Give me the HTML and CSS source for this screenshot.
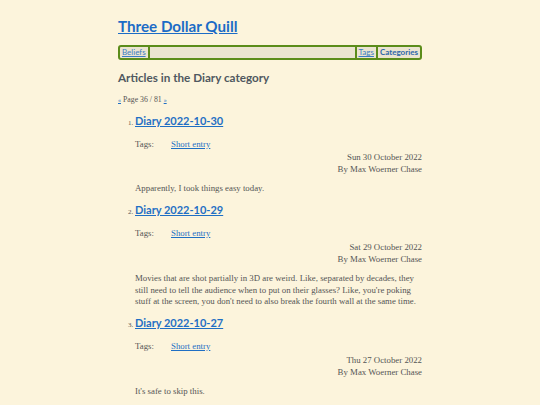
FILE: index.html
```html
<!DOCTYPE html>
<html>
<head>
<meta charset="utf-8">
<link rel="stylesheet" href="styles.css">
</head>
<body>
<div class="page">
  <header class="site-header">
    <h1 class="site-title"><a href="#">Three Dollar Quill</a></h1>
    <nav class="menu">
      <a class="menu-item" href="#">Beliefs</a>
      <span class="menu-spacer"></span>
      <a class="menu-item" href="#">Tags</a>
      <a class="menu-item current" href="#">Categories</a>
    </nav>
  </header>
  <main>
    <h2 class="page-heading">Articles in the Diary category</h2>
    <p class="pager"><a href="#">«</a> Page 36 / 81 <a href="#">»</a></p>
    <ol class="articles">
      <li class="article">
        <h3 class="article-title"><a href="#">Diary 2022-10-30</a></h3>
        <div class="tags"><span class="tags-label">Tags:</span><a href="#">Short entry</a></div>
        <div class="meta">
          <div>Sun 30 October 2022</div>
          <div>By Max Woerner Chase</div>
        </div>
        <p class="summary">Apparently, I took things easy today.</p>
      </li>
      <li class="article">
        <h3 class="article-title"><a href="#">Diary 2022-10-29</a></h3>
        <div class="tags"><span class="tags-label">Tags:</span><a href="#">Short entry</a></div>
        <div class="meta">
          <div>Sat 29 October 2022</div>
          <div>By Max Woerner Chase</div>
        </div>
        <p class="summary">Movies that are shot partially in 3D are weird. Like, separated by decades, they still need to tell the audience when to put on their glasses? Like, you're poking stuff at the screen, you don't need to also break the fourth wall at the same time.</p>
      </li>
      <li class="article">
        <h3 class="article-title"><a href="#">Diary 2022-10-27</a></h3>
        <div class="tags"><span class="tags-label">Tags:</span><a href="#">Short entry</a></div>
        <div class="meta">
          <div>Thu 27 October 2022</div>
          <div>By Max Woerner Chase</div>
        </div>
        <p class="summary">It's safe to skip this.</p>
      </li>
    </ol>
  </main>
</div>
</body>
</html>
```
FILE: styles.css
```css
html, body {
  margin: 0;
  padding: 0;
  background: #fcf4dc;
}
body {
  font-family: "Liberation Serif", serif;
  color: #555;
  font-size: 8.8px;
  line-height: 11.7px;
}
.page {
  width: 304px;
  margin: 0 auto;
  padding-top: 14px;
}
a { color: #1f6fc4; }
.site-title {
  margin: 0;
  font-family: Lato, sans-serif;
  font-size: 15.2px;
  line-height: 24px;
  font-weight: 700;
}
.site-title a { color: #1c6cc6; }
.menu {
  margin-top: 7px;
  display: flex;
  border: 2px solid #5b8c1a;
  border-radius: 3px;
  background: #ebe4d0;
  font-family: Lato, sans-serif;
  font-size: 8px;
  line-height: 11px;
}
.menu-item {
  padding: 0 2px;
  border-right: 2px solid #5b8c1a;
  color: #3a7cc2;
}
.menu-spacer {
  flex: 1;
  border-right: 2px solid #5b8c1a;
}
.menu-item:last-child { border-right: none; }
.menu-item.current {
  font-weight: 700;
  text-decoration: none;
  color: #2b66a8;
}
.page-heading {
  margin: 8px 0 0;
  font-family: Lato, sans-serif;
  font-size: 11.7px;
  line-height: 18px;
  color: #4f5860;
}
.pager {
  margin: 8px 0 0;
  font-size: 7.8px;
}
.pager a { font-size: 6px; }
.articles {
  margin: 0;
  padding-left: 17px;
}
.article::marker {
  font-size: 7px;
}
.article-title {
  margin: 6px 0 0;
  font-family: Lato, sans-serif;
  font-size: 11px;
  line-height: 16px;
  font-weight: 700;
}
.article + .article .article-title {
  margin-top: 7px;
}
.tags {
  margin-top: 10px;
  display: flex;
}
.tags-label { width: 36px; }
.meta {
  text-align: right;
  margin-top: 1px;
  line-height: 12px;
}
.summary {
  margin: 8px 0 0;
}
```
